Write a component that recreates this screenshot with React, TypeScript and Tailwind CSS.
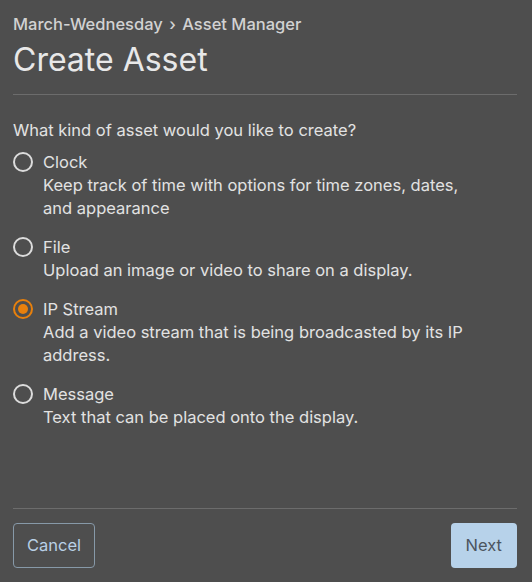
import { useState } from 'react'

const assetTypes = [
  {
    id: 'clock',
    label: 'Clock',
    description: 'Keep track of time with options for time zones, dates, and appearance',
  },
  {
    id: 'file',
    label: 'File',
    description: 'Upload an image or video to share on a display.',
  },
  {
    id: 'ip-stream',
    label: 'IP Stream',
    description: 'Add a video stream that is being broadcasted by its IP address.',
  },
  {
    id: 'message',
    label: 'Message',
    description: 'Text that can be placed onto the display.',
  },
]

function Radio({ checked }: { checked: boolean }) {
  return (
    <span
      className={`flex h-[20px] w-[20px] shrink-0 items-center justify-center rounded-full border-2 ${
        checked ? 'border-[#e8800c]' : 'border-[#dcdcdc]'
      }`}
    >
      {checked && <span className="h-[10px] w-[10px] rounded-full bg-[#e8800c]" />}
    </span>
  )
}

export default function App() {
  const [selected, setSelected] = useState('ip-stream')

  return (
    <div
      className="flex h-screen flex-col bg-[#4e4e4e] pl-[13px] pr-[15px] text-[#e2e2e2]"
      style={{ fontFamily: 'Inter, "Noto Sans", sans-serif' }}
    >
      {/* Header */}
      <div className="pt-[12px]">
        <div className="text-[16.5px] font-medium leading-[24px] text-[#d2d2d2]">
          March-Wednesday <span className="mx-[2px]">›</span> Asset Manager
        </div>
        <h1 className="mt-[4px] text-[32px] leading-[40px] font-normal text-[#e8e8e8]">
          Create Asset
        </h1>
      </div>

      <div className="mt-[14px] border-t border-[#6c6c6c]" />

      {/* Asset options */}
      <div className="pt-[23px]">
        <p className="text-[16.5px] leading-[24px]">What kind of asset would you like to create?</p>
        <div className="mt-[8px] flex flex-col gap-[15px]">
          {assetTypes.map((asset) => (
            <label
              key={asset.id}
              className="flex cursor-pointer gap-[10px]"
              onClick={() => setSelected(asset.id)}
            >
              <span className="flex h-[24px] items-center">
                <Radio checked={selected === asset.id} />
              </span>
              <span className="flex flex-col pr-[40px]">
                <span className="text-[16.5px] leading-[24px]">{asset.label}</span>
                <span className="text-[16.5px] leading-[23px]">{asset.description}</span>
              </span>
            </label>
          ))}
        </div>
      </div>

      {/* Footer */}
      <div className="mt-auto flex justify-between border-t border-[#6c6c6c] pt-[14px] pb-[14px]">
        <button className="h-[45px] rounded-[4px] border border-[#8799a8] px-[13px] text-[16.5px] text-[#b9d0e6]">
          Cancel
        </button>
        <button className="h-[45px] rounded-[4px] bg-[#b7d2ea] px-[15px] text-[16.5px] text-[#4c5560]">
          Next
        </button>
      </div>
    </div>
  )
}
